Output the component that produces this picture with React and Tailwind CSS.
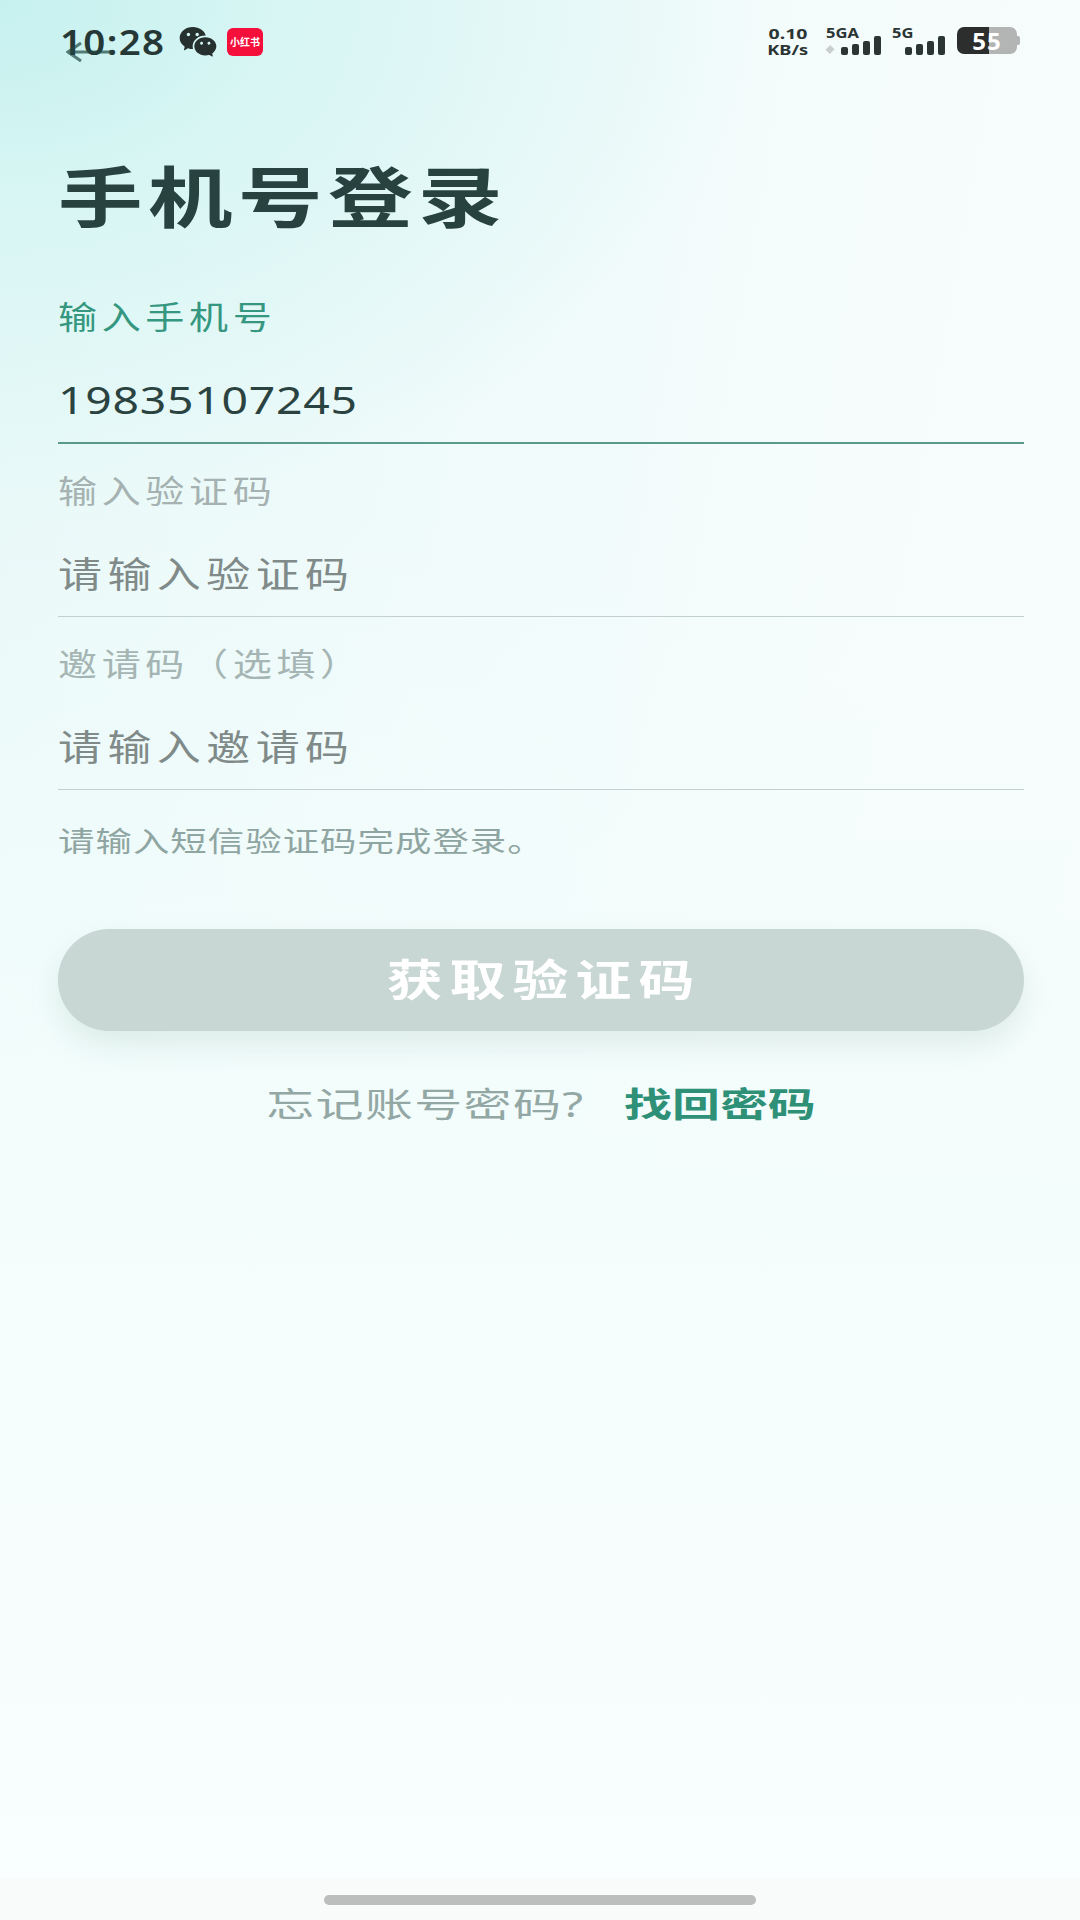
import React from 'react';
import { RiWechatFill } from 'react-icons/ri';

const cjk = "font-['Noto_Sans','Noto_Sans_CJK_SC',sans-serif]";

const SignalBars = ({ heights }) => (
  <div className="flex items-end gap-[4px]">
    {heights.map((h, idx) => (
      <div key={idx} className={`w-[7px] rounded-[2px] bg-[#2b3534] ${h}`} />
    ))}
  </div>
);

const Field = ({ label, labelClass, value, valueClass, lineClass }) => (
  <div>
    <div className="h-[34px] leading-[34px]">
      <span className={`inline-block origin-left scale-x-[1.22] whitespace-nowrap text-[32px] tracking-[3.8px] ${labelClass}`}>{label}</span>
    </div>
    <div className="mt-[45px] h-[44px] leading-[44px]">
      <span className={`inline-block origin-left scale-x-[1.22] whitespace-nowrap ${valueClass}`}>{value}</span>
    </div>
    <div className={`mt-[19px] ${lineClass}`} />
  </div>
);

const App = () => {
  return (
    <div className={`relative h-[1920px] w-[1080px] overflow-hidden bg-[radial-gradient(ellipse_760px_520px_at_0px_0px,#c6f1ef_0%,#d9f6f4_42%,rgba(230,249,248,0)_100%),linear-gradient(100deg,#e8f9f8_0%,#f6fcfc_70%,#f8fcfc_100%)] ${cjk}`}>
      <div className="absolute inset-x-0 top-[500px] bottom-0 bg-gradient-to-b from-transparent via-[#f3fdfc] to-[#fafefe]" />
      <div className="absolute inset-x-0 bottom-0 h-[42px] bg-[#f9fbfb]" />

      <div className="relative flex h-full flex-col">
        {/* Status bar */}
        <div className="flex h-[84px] items-start justify-between pl-[60px] pr-[60px] pt-[27px]">
          <div className="-mt-[5px] flex items-center">
            <span className="w-[104px] origin-left scale-x-[1.1] whitespace-nowrap text-[35px] font-semibold leading-[30px] tracking-[1.2px] text-[#263836]">10:28</span>
            <RiWechatFill className="ml-[14px] text-[40px] text-[#25302f]" />
            <div className="ml-[9px] flex h-[28px] w-[36px] items-center justify-center rounded-[6px] bg-[#f5103c] text-[10px] font-bold leading-none text-white">
              小红书
            </div>
          </div>

          <div className="flex items-start text-[#2b3534]">
            <div className="-mt-[3px] flex w-[42px] flex-col items-center font-bold">
              <span className="scale-x-[1.3] text-[15px] leading-[18px]">0.10</span>
              <span className="scale-x-[1.3] text-[14px] leading-[15px]">KB/s</span>
            </div>
            <div className="ml-[17px] -mt-[1px] flex w-[55px] flex-col">
              <span className="origin-left scale-x-[1.18] text-[14px] font-bold leading-[14px]">5GA</span>
              <div className="-mt-[4px] flex items-end justify-between">
                <div className="mb-[1px] h-[9px] w-[8px] rotate-45 scale-75 bg-[#c8cfce]" />
                <SignalBars heights={['h-[8px]', 'h-[11px]', 'h-[14px]', 'h-[19px]']} />
              </div>
            </div>
            <div className="ml-[11px] -mt-[1px] flex w-[53px] flex-col">
              <span className="origin-left scale-x-[1.18] text-[14px] font-bold leading-[14px]">5G</span>
              <div className="-mt-[4px] flex justify-end">
                <SignalBars heights={['h-[8px]', 'h-[11px]', 'h-[14px]', 'h-[19px]']} />
              </div>
            </div>
            <div className="relative ml-[12px] flex h-[27px] w-[60px]">
              <div className="h-full w-[32px] rounded-l-[7px] bg-[#2b2e2d]" />
              <div className="h-full w-[28px] rounded-r-[7px] bg-[#b3b5b4]" />
              <span className="absolute inset-0 flex items-center justify-center text-[24px] font-bold leading-none tracking-[1px] text-white">55</span>
            </div>
            <div className="mt-[9px] h-[9px] w-[3px] rounded-r-[2px] bg-[#b3b5b4]" />
          </div>
        </div>

        {/* Back arrow sits on top of the clock */}
        <svg className="absolute left-[66px] top-[41px]" width="48" height="22" viewBox="0 0 48 22" fill="none">
          <path d="M46 11H2M15 2 2 11l13 9" stroke="#1f4743" strokeOpacity="0.7" strokeWidth="3" />
        </svg>

        {/* Form */}
        <div className="flex flex-col pl-[58px] pr-[56px]">
          <h1 className="mt-[76px] h-[71px] leading-[72px]">
            <span className="inline-block origin-left scale-x-[1.28] whitespace-nowrap text-[66px] font-bold tracking-[4.3px] text-[#28433f]">手机号登录</span>
          </h1>

          <div className="mt-[69px]">
            <Field
              label="输入手机号"
              labelClass="text-[#35977f]"
              value="19835107245"
              valueClass="-translate-y-[2px] text-[38px] tracking-[0.6px] text-[#2b4340]"
              lineClass="h-[2px] bg-[#5a9a8b]"
            />
            <div className="mt-[30px]">
              <Field
                label="输入验证码"
                labelClass="text-[#a5b2b1]"
                value="请输入验证码"
                valueClass="text-[36px] tracking-[4.5px] text-[#7f8a89]"
                lineClass="h-[1px] bg-[#c3d0d0]"
              />
            </div>
            <div className="mt-[30px]">
              <Field
                label="邀请码（选填）"
                labelClass="text-[#a5b5b3]"
                value="请输入邀请码"
                valueClass="text-[36px] tracking-[4.5px] text-[#7f8a89]"
                lineClass="h-[1px] bg-[#c3d0d0]"
              />
            </div>
          </div>

          <p className="mt-[33px] h-[36px] leading-[36px]">
            <span className="inline-block origin-left scale-x-[1.3] whitespace-nowrap text-[28px] tracking-[0.8px] text-[#8fa5a2]">请输入短信验证码完成登录。</span>
          </p>

          <button className="mt-[70px] flex h-[102px] w-full items-center justify-center rounded-full bg-[#c8d6d4] pl-[6px] shadow-[0_14px_28px_rgba(150,180,175,0.22)]">
            <span className="scale-x-[1.3] whitespace-nowrap text-[43px] font-bold tracking-[5.4px] text-white">获取验证码</span>
          </button>

          <div className="mt-[50px] flex h-[46px] scale-x-[1.41] items-center justify-center whitespace-nowrap text-[34px] leading-[46px]">
            <span className="tracking-[1px] text-[#93a8a5]">忘记账号密码?</span>
            <span className="ml-[28px] font-bold text-[#2f9078]">找回密码</span>
          </div>
        </div>

        {/* Home indicator */}
        <div className="absolute bottom-[15px] left-[324px] h-[10px] w-[432px] rounded-full bg-[#bcbebd]" />
      </div>
    </div>
  );
};

export default App;
